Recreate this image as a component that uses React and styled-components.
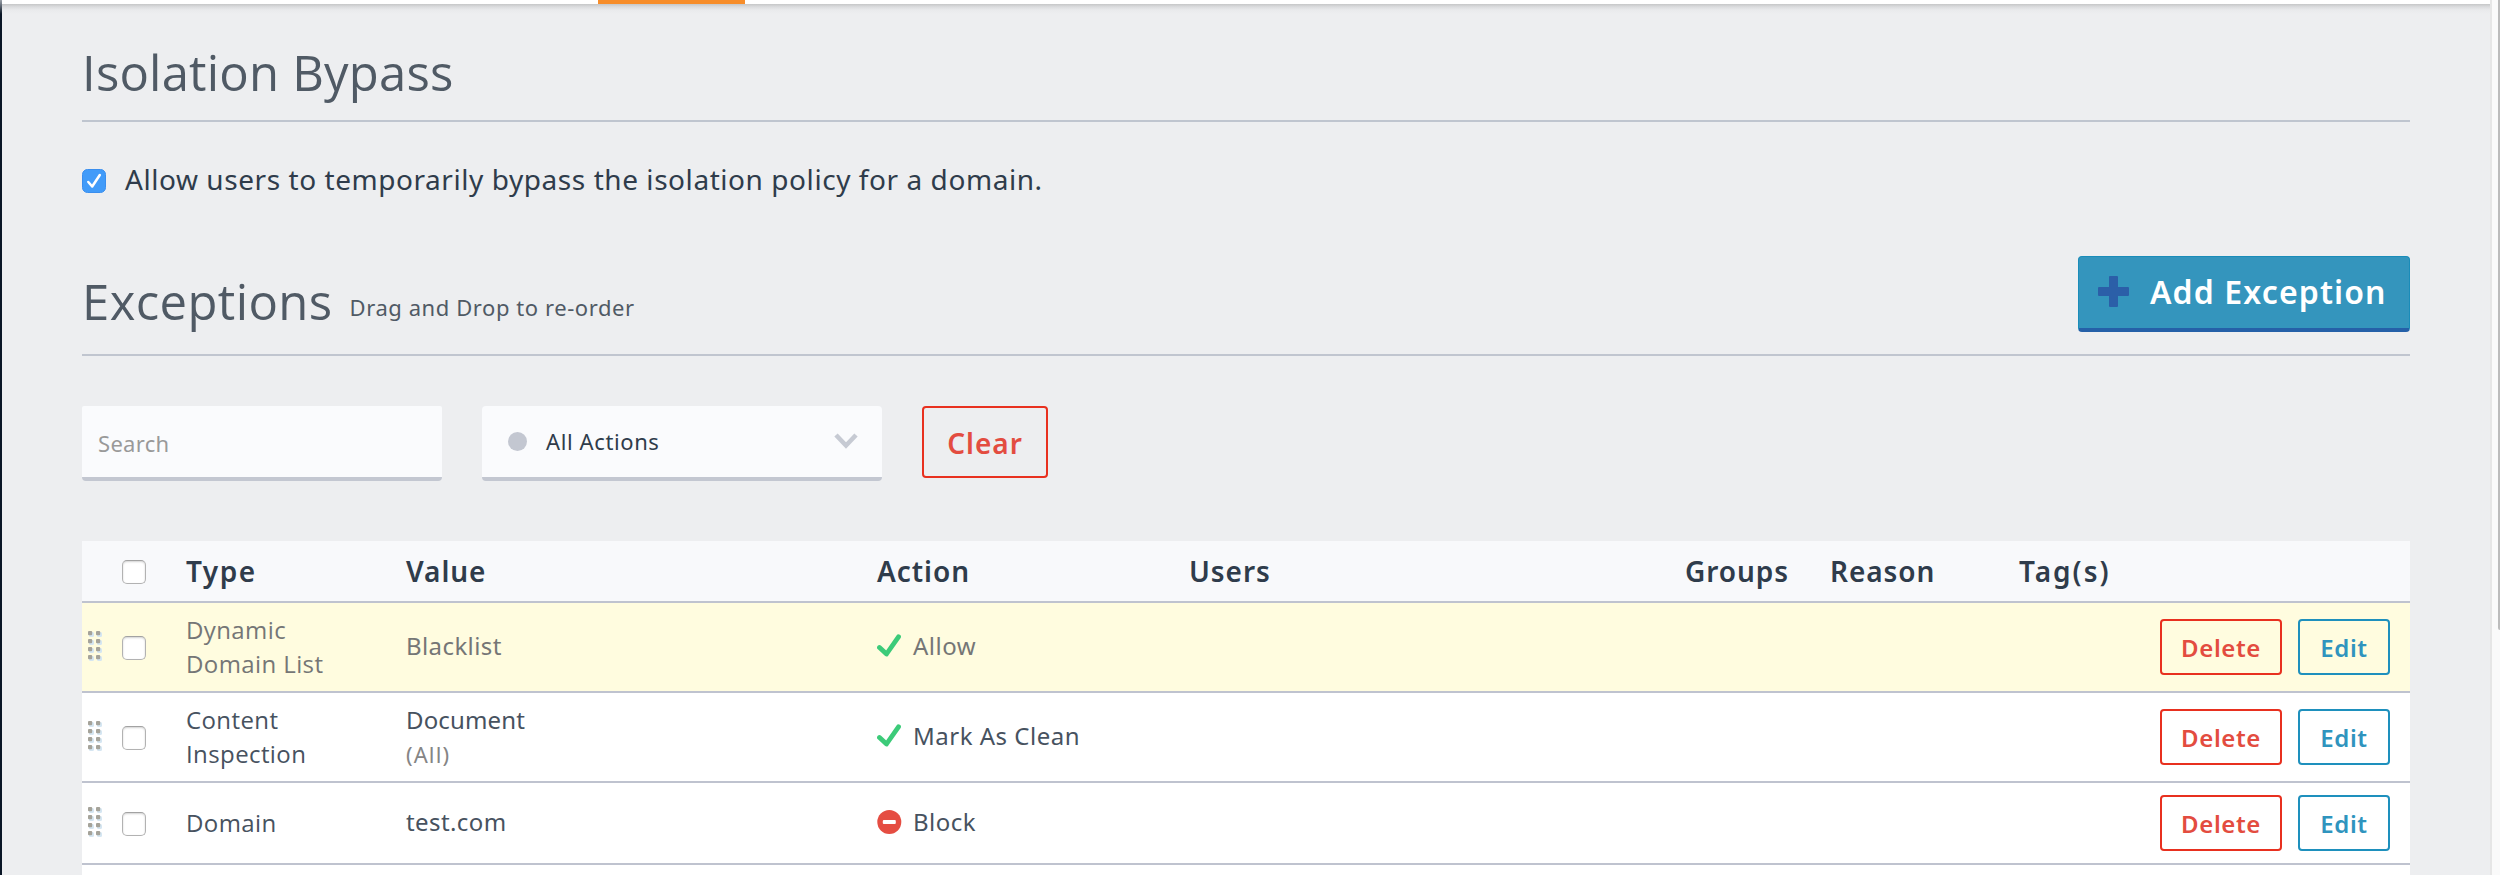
import React from "react";
import styled, { createGlobalStyle } from "styled-components";

const SANS = '"Noto Sans", sans-serif';
const HUMANIST = '"Open Sans", sans-serif';

const GlobalStyle = createGlobalStyle`
  *, *::before, *::after { box-sizing: border-box; }
  body { margin: 0; background: #edeef0; overflow: hidden; }
`;

const Shell = styled.div`
  display: flex;
  width: 2500px;
  height: 875px;
  overflow: hidden;
  font-family: ${SANS};
  color: #2f3c4b;
  background: #edeef0;
`;

const SideEdge = styled.div`
  flex: none;
  width: 2px;
  background: linear-gradient(#9aa0a8 0, #0a1626 14px);
`;

const Page = styled.div`
  flex: 1;
  min-width: 0;
`;

const TabBar = styled.nav`
  height: 4px;
  padding-left: 596px;
  background: #fff;
`;

const ActiveTab = styled.div`
  width: 147px;
  height: 4px;
  background: #f78d2a;
`;

const Content = styled.main`
  height: 871px;
  padding: 0 80px;
  background: linear-gradient(#c6c7c8 0, #dcdddf 3px, #e9eaec 6px, #edeef0 10px);
`;

const ScrollTrack = styled.div`
  flex: none;
  width: 10px;
  display: flex;
  justify-content: flex-end;
  border-left: 2px solid #e6e6e6;
  background: #fafafa;
`;

const ScrollThumb = styled.div`
  width: 2px;
  height: 630px;
  border-bottom-left-radius: 2px;
  background: #bcbcbc;
`;

const Heading = styled.h1`
  margin: 0;
  font: 400 49px/60px ${HUMANIST};
  letter-spacing: ${(p) => p.$spacing}px;
  color: #505a65;
`;

const BypassHeader = styled.header`
  height: 118px;
  padding-top: 38px;
  border-bottom: 2px solid #bfc5cf;
`;

const BypassOption = styled.label`
  display: flex;
  align-items: center;
  gap: 19px;
  height: 40px;
  margin-top: 37px;
  font-size: 28px;
  letter-spacing: 0.56px;
`;

const CheckMark = styled.svg`
  flex: none;
  width: 24px;
  height: 24px;
  margin-top: 4px;
`;

const ExceptionsHeader = styled.header`
  display: flex;
  align-items: flex-start;
  height: 100px;
  margin-top: 57px;
  border-bottom: 2px solid #c0c5cf;
  ${Heading} { margin-top: 15px; }
`;

const Hint = styled.span`
  flex: 1;
  margin: 36px 0 0 17px;
  font-size: 22px;
  line-height: 30px;
  letter-spacing: 0.57px;
  color: #505a65;
`;

const AddButton = styled.button`
  display: flex;
  align-items: center;
  gap: 20px;
  width: 332px;
  height: 76px;
  padding: 0 0 2px 18px;
  border: 1px solid #1a8cb9;
  border-bottom: 4px solid #2560a8;
  border-radius: 4px;
  background: #3495bd;
  color: #fff;
  font: 600 32px/40px ${SANS};
  letter-spacing: 1.12px;
  white-space: nowrap;
`;

const Filters = styled.div`
  display: flex;
  gap: 40px;
  height: 75px;
  margin-top: 50px;
`;

const SearchInput = styled.input`
  width: 360px;
  height: 75px;
  padding: 2px 16px 0 16px;
  border: 0;
  border-bottom: 4px solid #c3c7d1;
  border-radius: 2px 2px 4px 4px;
  background: #fafbfd;
  font: 400 22px/30px ${SANS};
  letter-spacing: 0.3px;
  &::placeholder { color: #999; opacity: 1; }
`;

const ActionSelect = styled.div`
  display: flex;
  align-items: center;
  width: 400px;
  height: 75px;
  padding: 0 24px 1px 26px;
  border-bottom: 4px solid #c3c7d1;
  border-radius: 4px;
  background: #fafbfd;
  font-size: 22px;
  letter-spacing: 0.61px;
  svg { margin-left: auto; }
`;

const StatusDot = styled.span`
  width: 19px;
  height: 19px;
  margin-right: 19px;
  border-radius: 50%;
  background: #c3c7d1;
`;

const OutlineButton = styled.button`
  flex: none;
  display: flex;
  align-items: center;
  justify-content: center;
  width: ${(p) => p.$width}px;
  height: ${(p) => p.$height || 56}px;
  padding: 2px 0 0;
  border: 2px solid ${(p) => (p.$danger ? "#e8301f" : "#1e90bd")};
  border-radius: 4px;
  background: transparent;
  color: ${(p) => (p.$danger ? "#e34c40" : "#2f94be")};
  font: 600 ${(p) => p.$size || 24}px/34px ${SANS};
  letter-spacing: ${(p) => p.$spacing || 0.6}px;
`;

const Table = styled.section`
  margin-top: 60px;
  height: 400px;
  background: #fff;
`;

const Row = styled.div`
  display: grid;
  grid-template-columns: 40px 64px 220px 471px 312px 496px 145px 189px 1fr;
  align-items: center;
  height: ${(p) => p.$height}px;
  border-bottom: 2px solid #bfc3cf;
  background: ${(p) => (p.$highlight ? "#fffcdf" : "#fff")};
  color: ${(p) => (p.$highlight ? "#757676" : "#47525f")};
`;

const HeadRow = styled(Row)`
  background: #f8f9fb;
  color: #2f3c4b;
`;

const HeadCell = styled.div`
  padding-bottom: 1px;
  font-weight: 600;
  font-size: 28px;
  line-height: 36px;
  letter-spacing: ${(p) => p.$spacing || 0.95}px;
`;

const Cell = styled.div`
  padding-bottom: 2px;
  font-size: 24px;
  line-height: 34px;
  letter-spacing: ${(p) => p.$spacing || 0.4}px;
`;

const TypeCell = styled(Cell)`
  width: 150px;
  padding-bottom: 0;
  font-family: ${HUMANIST};
`;

const DetailCell = styled(Cell)`
  padding-bottom: 0;
`;

const Note = styled.div`
  font-size: 22px;
  letter-spacing: 1.1px;
  color: #858585;
`;

const ActionCell = styled(Cell)`
  display: flex;
  align-items: center;
  gap: 11px;
`;

const Box = styled.span`
  width: 24px;
  height: 24px;
  margin-top: 2px;
  border: 1px solid #b2b2b2;
  border-top-color: #a2a2a2;
  border-radius: 5px;
  background: #fff;
  box-shadow: inset 0 1px 2px rgba(0, 0, 0, 0.18);
`;

const Handle = styled.svg`
  width: 18px;
  height: 32px;
  margin: -3px 0 0 5px;
`;

const RowButtons = styled.div`
  display: flex;
  justify-content: flex-end;
  gap: 16px;
  padding-right: 20px;
`;

const GRIP = [0, 8, 16, 24].flatMap((y) => [0, 8].map((x) => [x, y]));

function Grip() {
  return (
    <Handle viewBox="0 0 18 32">
      {GRIP.map(([x, y]) => (
        <g key={`${x}-${y}`}>
          <rect x={x + 2} y={y + 2} width="5" height="5" rx="1.5" fill="#d5e6f2" />
          <rect x={x + 1} y={y + 1} width="4.2" height="4.2" rx="1" fill="#a5a39a" />
        </g>
      ))}
    </Handle>
  );
}

function AllowIcon() {
  return (
    <svg width="25" height="25" viewBox="0 0 25 25">
      <path d="M2.5 13.5 L9.5 20 L21.5 2.8" fill="none" stroke="#3ccb79" strokeWidth="4.8" strokeLinecap="round" strokeLinejoin="round" />
    </svg>
  );
}

function BlockIcon() {
  return (
    <svg width="25" height="25" viewBox="0 0 25 25">
      <circle cx="12.3" cy="12" r="12" fill="#e54d42" />
      <rect x="5.8" y="10" width="13" height="4" rx="1" fill="#fff" />
    </svg>
  );
}

const rows = [
  { type: "Dynamic Domain List", value: "Blacklist", action: "Allow", icon: AllowIcon, highlight: true, height: 90 },
  { type: "Content Inspection", value: "Document", note: "(All)", action: "Mark As Clean", icon: AllowIcon, height: 90 },
  { type: "Domain", value: "test.com", action: "Block", icon: BlockIcon, height: 82 },
];

export default function App() {
  return (
    <Shell>
      <GlobalStyle />
      <SideEdge />
      <Page>
        <TabBar><ActiveTab /></TabBar>
        <Content>
          <BypassHeader><Heading $spacing={0.2}>Isolation Bypass</Heading></BypassHeader>
          <BypassOption>
            <CheckMark viewBox="0 0 24 24">
              <rect x="0.5" y="0.5" width="23" height="23" rx="5" fill="#419bf9" stroke="#3a8eee" />
              <path d="M6.3 13 L10.2 17.5 L17.8 6" fill="none" stroke="#fff" strokeWidth="2.5" strokeLinecap="round" strokeLinejoin="round" />
            </CheckMark>
            Allow users to temporarily bypass the isolation policy for a domain.
          </BypassOption>
          <ExceptionsHeader>
            <Heading $spacing={0.4}>Exceptions</Heading>
            <Hint>Drag and Drop to re-order</Hint>
            <AddButton>
              <svg width="33" height="33" viewBox="0 0 33 33">
                <path d="M16.5 2V31M2 16.5H31" stroke="#2b5fa8" strokeWidth="9" />
                <path d="M13 2H20M13 31H20M2 13V20M31 13V20" stroke="#2b5fa8" strokeWidth="2" strokeLinecap="round" />
              </svg>
              Add Exception
            </AddButton>
          </ExceptionsHeader>
          <Filters>
            <SearchInput placeholder="Search" />
            <ActionSelect>
              <StatusDot />
              All Actions
              <svg width="24" height="16" viewBox="0 0 24 16">
                <path d="M2 2 L12 12.5 L22 2" fill="none" stroke="#c6cad3" strokeWidth="4.6" />
              </svg>
            </ActionSelect>
            <OutlineButton $danger $width={126} $height={72} $size={28} $spacing={1}>Clear</OutlineButton>
          </Filters>
          <Table>
            <HeadRow $height={62}>
              <span />
              <Box />
              <HeadCell $spacing={1.5}>Type</HeadCell>
              <HeadCell>Value</HeadCell>
              <HeadCell>Action</HeadCell>
              <HeadCell>Users</HeadCell>
              <HeadCell>Groups</HeadCell>
              <HeadCell>Reason</HeadCell>
              <HeadCell $spacing={2}>Tag(s)</HeadCell>
            </HeadRow>
            {rows.map(({ icon: Icon, ...row }) => (
              <Row key={row.type} $height={row.height} $highlight={row.highlight}>
                <Grip />
                <Box />
                <TypeCell>{row.type}</TypeCell>
                {row.note ? (
                  <DetailCell $spacing={0.15}>
                    {row.value}
                    <Note>{row.note}</Note>
                  </DetailCell>
                ) : (
                  <Cell>{row.value}</Cell>
                )}
                <ActionCell $spacing={0.5}><Icon />{row.action}</ActionCell>
                <span />
                <span />
                <span />
                <RowButtons>
                  <OutlineButton $danger $width={122}>Delete</OutlineButton>
                  <OutlineButton $width={92}>Edit</OutlineButton>
                </RowButtons>
              </Row>
            ))}
          </Table>
        </Content>
      </Page>
      <ScrollTrack><ScrollThumb /></ScrollTrack>
    </Shell>
  );
}
